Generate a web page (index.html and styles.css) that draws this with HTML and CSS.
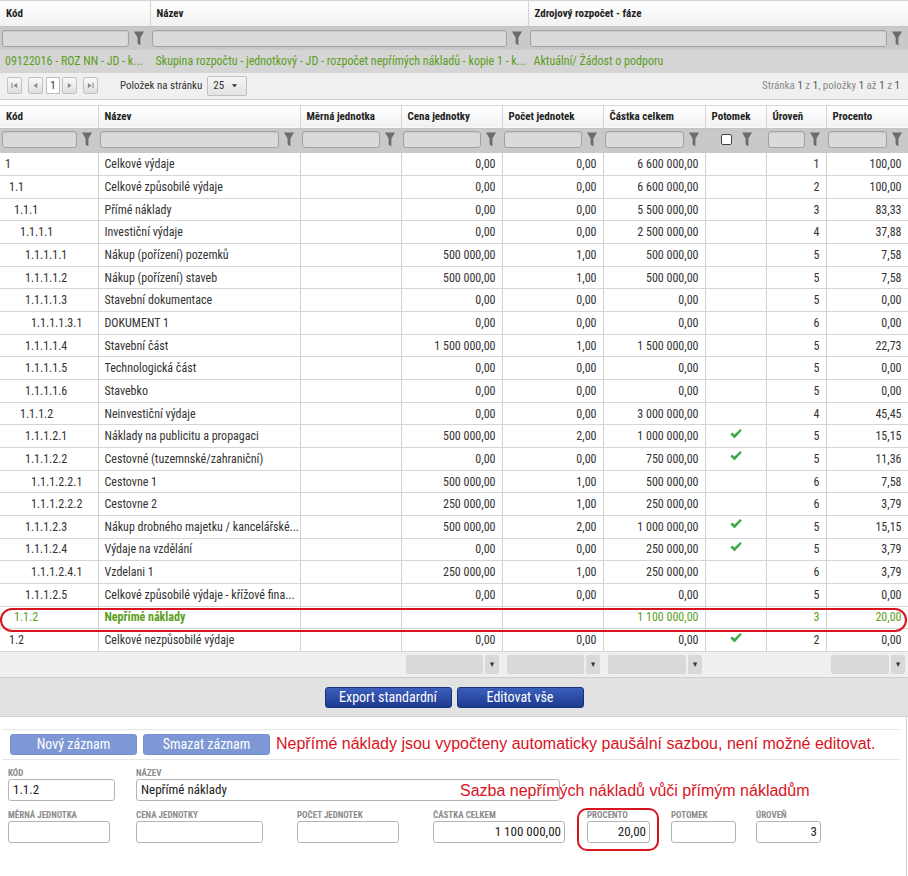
FILE: index.html
```html
<!DOCTYPE html>
<html lang="cs">
<head>
<meta charset="utf-8">
<title>Rozpočet</title>
<link rel="stylesheet" href="styles.css">
</head>
<body>
<svg width="0" height="0" class="defs">
  <defs>
    <symbol id="funnel" viewBox="0 0 10 15"><path d="M0 0.5 H10 L6.4 6.5 V14.5 L3.6 12.5 V6.5 Z"/></symbol>
    <symbol id="check" viewBox="0 0 12 10"><path d="M0.3 5.3 L2.3 3.4 L4.4 5.5 L10.3 0 L11.8 1.6 L4.5 9.6 Z" fill="#3ea84a"/></symbol>
  </defs>
</svg>

<div class="top-grid">
  <table class="grid top">
    <colgroup><col class="c150"><col class="c378"><col class="c380"></colgroup>
    <thead>
      <tr class="head"><th>Kód</th><th>Název</th><th>Zdrojový rozpočet - fáze</th></tr>
      <tr class="filter">
        <td><div class="fbox"><span class="fin"></span><svg class="funnel"><use href="#funnel"/></svg></div></td>
        <td><div class="fbox"><span class="fin"></span><svg class="funnel"><use href="#funnel"/></svg></div></td>
        <td><div class="fbox"><span class="fin"></span><svg class="funnel"><use href="#funnel"/></svg></div></td>
      </tr>
    </thead>
    <tbody>
      <tr class="sel">
        <td>09122016 - ROZ NN - JD - k...</td>
        <td>Skupina rozpočtu - jednotkový - JD - rozpočet nepřímých nákladů - kopie 1 - k...</td>
        <td>Aktuální/ Žádost o podporu</td>
      </tr>
    </tbody>
  </table>
  <div class="pager">
    <span class="pbtn"><svg viewBox="0 0 8 8"><rect x="0.5" y="1" width="1.2" height="6"/><path d="M7 1 V7 L2.8 4 Z"/></svg></span>
    <span class="pbtn"><svg viewBox="0 0 8 8"><path d="M6 1 V7 L1.8 4 Z"/></svg></span>
    <span class="pinput">1</span>
    <span class="pbtn"><svg viewBox="0 0 8 8"><path d="M2 1 V7 L6.2 4 Z"/></svg></span>
    <span class="pbtn last"><svg viewBox="0 0 8 8"><path d="M1 1 V7 L5.2 4 Z"/><rect x="6.3" y="1" width="1.2" height="6"/></svg></span>
    <span class="plabel">Položek na stránku</span>
    <span class="psel">25<svg viewBox="0 0 8 8"><path d="M1 2.5 H7 L4 6 Z"/></svg></span>
    <span class="pinfo">Stránka <b>1</b> z <b>1</b>, položky <b>1</b> až <b>1</b> z <b>1</b></span>
  </div>
</div>

<div class="main-grid">
  <table class="grid main">
    <colgroup>
      <col class="w98"><col class="w202"><col class="w101"><col class="w101"><col class="w101"><col class="w102"><col class="w61"><col class="w60"><col class="w82">
    </colgroup>
    <thead>
      <tr class="head">
        <th>Kód</th><th>Název</th><th>Měrná jednotka</th><th>Cena jednotky</th><th>Počet jednotek</th><th>Částka celkem</th><th>Potomek</th><th>Úroveň</th><th>Procento</th>
      </tr>
      <tr class="filter">
        <td><div class="fbox"><span class="fin"></span><svg class="funnel"><use href="#funnel"/></svg></div></td>
        <td><div class="fbox"><span class="fin"></span><svg class="funnel"><use href="#funnel"/></svg></div></td>
        <td><div class="fbox"><span class="fin"></span><svg class="funnel"><use href="#funnel"/></svg></div></td>
        <td><div class="fbox"><span class="fin"></span><svg class="funnel"><use href="#funnel"/></svg></div></td>
        <td><div class="fbox"><span class="fin"></span><svg class="funnel"><use href="#funnel"/></svg></div></td>
        <td><div class="fbox"><span class="fin"></span><svg class="funnel"><use href="#funnel"/></svg></div></td>
        <td><div class="fbox center"><span class="cbx"></span><svg class="funnel"><use href="#funnel"/></svg></div></td>
        <td><div class="fbox"><span class="fin"></span><svg class="funnel"><use href="#funnel"/></svg></div></td>
        <td><div class="fbox"><span class="fin"></span><svg class="funnel"><use href="#funnel"/></svg></div></td>
      </tr>
    </thead>
    <tbody>
      <tr><td class="lv1">1</td><td>Celkové výdaje</td><td></td><td class="num">0,00</td><td class="num">0,00</td><td class="num">6 600 000,00</td><td></td><td class="num">1</td><td class="num">100,00</td></tr>
      <tr><td class="lv2">1.1</td><td>Celkové způsobilé výdaje</td><td></td><td class="num">0,00</td><td class="num">0,00</td><td class="num">6 600 000,00</td><td></td><td class="num">2</td><td class="num">100,00</td></tr>
      <tr><td class="lv3">1.1.1</td><td>Přímé náklady</td><td></td><td class="num">0,00</td><td class="num">0,00</td><td class="num">5 500 000,00</td><td></td><td class="num">3</td><td class="num">83,33</td></tr>
      <tr><td class="lv4">1.1.1.1</td><td>Investiční výdaje</td><td></td><td class="num">0,00</td><td class="num">0,00</td><td class="num">2 500 000,00</td><td></td><td class="num">4</td><td class="num">37,88</td></tr>
      <tr><td class="lv5">1.1.1.1.1</td><td>Nákup (pořízení) pozemků</td><td></td><td class="num">500 000,00</td><td class="num">1,00</td><td class="num">500 000,00</td><td></td><td class="num">5</td><td class="num">7,58</td></tr>
      <tr><td class="lv5">1.1.1.1.2</td><td>Nákup (pořízení) staveb</td><td></td><td class="num">500 000,00</td><td class="num">1,00</td><td class="num">500 000,00</td><td></td><td class="num">5</td><td class="num">7,58</td></tr>
      <tr><td class="lv5">1.1.1.1.3</td><td>Stavební dokumentace</td><td></td><td class="num">0,00</td><td class="num">0,00</td><td class="num">0,00</td><td></td><td class="num">5</td><td class="num">0,00</td></tr>
      <tr><td class="lv6">1.1.1.1.3.1</td><td>DOKUMENT 1</td><td></td><td class="num">0,00</td><td class="num">0,00</td><td class="num">0,00</td><td></td><td class="num">6</td><td class="num">0,00</td></tr>
      <tr><td class="lv5">1.1.1.1.4</td><td>Stavební část</td><td></td><td class="num">1 500 000,00</td><td class="num">1,00</td><td class="num">1 500 000,00</td><td></td><td class="num">5</td><td class="num">22,73</td></tr>
      <tr><td class="lv5">1.1.1.1.5</td><td>Technologická část</td><td></td><td class="num">0,00</td><td class="num">0,00</td><td class="num">0,00</td><td></td><td class="num">5</td><td class="num">0,00</td></tr>
      <tr><td class="lv5">1.1.1.1.6</td><td>Stavebko</td><td></td><td class="num">0,00</td><td class="num">0,00</td><td class="num">0,00</td><td></td><td class="num">5</td><td class="num">0,00</td></tr>
      <tr><td class="lv4">1.1.1.2</td><td>Neinvestiční výdaje</td><td></td><td class="num">0,00</td><td class="num">0,00</td><td class="num">3 000 000,00</td><td></td><td class="num">4</td><td class="num">45,45</td></tr>
      <tr><td class="lv5">1.1.1.2.1</td><td>Náklady na publicitu a propagaci</td><td></td><td class="num">500 000,00</td><td class="num">2,00</td><td class="num">1 000 000,00</td><td class="chk"><svg><use href="#check"/></svg></td><td class="num">5</td><td class="num">15,15</td></tr>
      <tr><td class="lv5">1.1.1.2.2</td><td>Cestovné (tuzemnské/zahraniční)</td><td></td><td class="num">0,00</td><td class="num">0,00</td><td class="num">750 000,00</td><td class="chk"><svg><use href="#check"/></svg></td><td class="num">5</td><td class="num">11,36</td></tr>
      <tr><td class="lv6">1.1.1.2.2.1</td><td>Cestovne 1</td><td></td><td class="num">500 000,00</td><td class="num">1,00</td><td class="num">500 000,00</td><td></td><td class="num">6</td><td class="num">7,58</td></tr>
      <tr><td class="lv6">1.1.1.2.2.2</td><td>Cestovne 2</td><td></td><td class="num">250 000,00</td><td class="num">1,00</td><td class="num">250 000,00</td><td></td><td class="num">6</td><td class="num">3,79</td></tr>
      <tr><td class="lv5">1.1.1.2.3</td><td>Nákup drobného majetku / kancelářské...</td><td></td><td class="num">500 000,00</td><td class="num">2,00</td><td class="num">1 000 000,00</td><td class="chk"><svg><use href="#check"/></svg></td><td class="num">5</td><td class="num">15,15</td></tr>
      <tr><td class="lv5">1.1.1.2.4</td><td>Výdaje na vzdělání</td><td></td><td class="num">0,00</td><td class="num">0,00</td><td class="num">250 000,00</td><td class="chk"><svg><use href="#check"/></svg></td><td class="num">5</td><td class="num">3,79</td></tr>
      <tr><td class="lv6">1.1.1.2.4.1</td><td>Vzdelani 1</td><td></td><td class="num">250 000,00</td><td class="num">1,00</td><td class="num">250 000,00</td><td></td><td class="num">6</td><td class="num">3,79</td></tr>
      <tr><td class="lv5">1.1.1.2.5</td><td>Celkové způsobilé výdaje - křížové fina...</td><td></td><td class="num">0,00</td><td class="num">0,00</td><td class="num">0,00</td><td></td><td class="num">5</td><td class="num">0,00</td></tr>
      <tr class="green"><td class="lv3">1.1.2</td><td class="strong">Nepřímé náklady</td><td></td><td></td><td></td><td class="num">1 100 000,00</td><td></td><td class="num">3</td><td class="num">20,00</td></tr>
      <tr><td class="lv2">1.2</td><td>Celkové nezpůsobilé výdaje</td><td></td><td class="num">0,00</td><td class="num">0,00</td><td class="num">0,00</td><td class="chk"><svg><use href="#check"/></svg></td><td class="num">2</td><td class="num">0,00</td></tr>
    </tbody>
    <tfoot>
      <tr class="totals">
        <td></td><td></td><td></td>
        <td><div class="agg"><span class="abox"></span><span class="abtn">&#9662;</span></div></td>
        <td><div class="agg"><span class="abox"></span><span class="abtn">&#9662;</span></div></td>
        <td><div class="agg"><span class="abox"></span><span class="abtn">&#9662;</span></div></td>
        <td></td><td></td>
        <td><div class="agg"><span class="abox"></span><span class="abtn">&#9662;</span></div></td>
      </tr>
    </tfoot>
  </table>
  <div class="row-outline"></div>
</div>

<div class="toolbar">
  <button class="btn dark">Export standardní</button>
  <button class="btn dark">Editovat vše</button>
</div>

<div class="detail">
  <div class="actions">
    <button class="btn light">Nový záznam</button>
    <button class="btn light">Smazat záznam</button>
    <span class="note">Nepřímé náklady jsou vypočteny automaticky paušální sazbou, není možné editovat.</span>
  </div>
  <div class="form">
    <div class="frow">
      <div class="field f-kod"><span class="lbl">Kód</span><div class="inp i-kod">1.1.2</div></div>
      <div class="field f-naz"><span class="lbl">Název</span><div class="inp i-naz">Nepřímé náklady</div></div>
    </div>
    <div class="frow">
      <div class="field f-mj"><span class="lbl">Měrná jednotka</span><div class="inp i-mj"></div></div>
      <div class="field f-cj"><span class="lbl">Cena jednotky</span><div class="inp i-cj"></div></div>
      <div class="field f-pj"><span class="lbl">Počet jednotek</span><div class="inp i-pj"></div></div>
      <div class="field f-cc"><span class="lbl">Částka celkem</span><div class="inp i-cc r">1 100 000,00</div></div>
      <div class="field f-pr"><span class="lbl">Procento</span><div class="inp i-pr r">20,00</div></div>
      <div class="field f-po"><span class="lbl">Potomek</span><div class="inp i-po"></div></div>
      <div class="field f-ur"><span class="lbl">Úroveň</span><div class="inp i-ur r">3</div></div>
    </div>
  </div>
  <div class="anno-text">Sazba nepřímých nákladů vůči přímým nákladům</div>
  <div class="anno-box"></div>
</div>
</body>
</html>
```

FILE: styles.css
```css
:root {
  --cond: "Liberation Sans Narrow", "Roboto Condensed", "DejaVu Sans Condensed", Roboto, sans-serif;
  --green: #5c9e22;
  --red: #d8141e;
}
* { box-sizing: border-box; }
html, body { margin: 0; padding: 0; }
body {
  width: 908px;
  height: 876px;
  overflow: hidden;
  font-family: var(--cond);
  color: #333;
  background: #fff;
}
.defs { position: absolute; width: 0; height: 0; }

/* ---------- grids ---------- */
.grid {
  border-collapse: collapse;
  table-layout: fixed;
  width: 908px;
}
.c150 { width: 150px; } .c378 { width: 378px; } .c380 { width: 380px; }
.w98 { width: 98px; } .w202 { width: 202px; } .w101 { width: 101px; } .w102 { width: 102px; }
.w61 { width: 61px; } .w60 { width: 60px; } .w82 { width: 82px; }

.grid .head th {
  height: 23px;
  padding: 0 6px;
  text-align: left;
  font-weight: bold;
  font-size: 11px;
  color: #222;
  background: linear-gradient(#ffffff, #f1f1f1);
  border-top: 1px solid #d8d8d8;
  border-right: 1px solid #d4d4d4;
  border-bottom: 1px solid #c4c4c4;
  white-space: nowrap;
}
.top .head th { height: 26px; }
.grid .filter td {
  height: 23px;
  padding: 0 6px 0 2px;
  background: #c9c9c9;
}
.main .filter td {
  height: 25px;
  padding-bottom: 2px;
}
.fbox { display: flex; align-items: center; gap: 5px; }
.fbox.center { justify-content: center; gap: 10px; padding-left: 6px; }
.fin {
  flex: 1;
  height: 17px;
  background: #dadada;
  border: 1px solid #a2a2a2;
  border-radius: 3px;
  box-shadow: inset 0 1px 1px rgba(0,0,0,0.08);
}
.funnel { width: 10px; height: 15px; flex: none; fill: #6c6c6c; }
.cbx {
  width: 11px; height: 11px;
  background: #fff;
  border: 1px solid #444;
  border-radius: 2px;
}

.top .sel td {
  height: 23px;
  padding: 0 5px;
  background: #d5d5d5;
  color: var(--green);
  font-size: 12px;
  white-space: nowrap;
  overflow: hidden;
  border-right: 1px solid #d5d5d5;
}

/* pager */
.pager {
  height: 27px;
  display: flex;
  align-items: center;
  padding: 0 8px 0 7px;
  background: #f0f0f0;
  border-bottom: 1px solid #c8c8c8;
  font-size: 11px;
  color: #333;
}
.pbtn {
  width: 15px; height: 17px;
  display: flex; align-items: center; justify-content: center;
  border: 1px solid #c2c2c2;
  border-radius: 2px;
  background: linear-gradient(#f9f9f9, #dedede);
  margin-right: 6px;
}
.pbtn svg { width: 7px; height: 7px; fill: #8a8a8a; }
.pbtn:nth-child(2) { margin-right: 3px; }
.pinput {
  width: 14px; height: 17px;
  background: #fff;
  border: 1px solid #bdbdbd;
  font-size: 11px;
  display: flex; align-items: center; justify-content: center;
  margin-right: 2px;
}
.plabel { margin-left: 16px; }
.psel {
  margin-left: 5px;
  width: 40px; height: 20px;
  display: flex; align-items: center; justify-content: space-between;
  padding: 0 8px 0 5px;
  border: 1px solid #c0c0c0;
  border-radius: 2px;
  background: linear-gradient(#f6f6f6, #e2e2e2);
  font-size: 11px;
}
.psel svg { width: 7px; height: 7px; fill: #333; }
.pinfo { margin-left: auto; color: #8a8a8a; }
.pinfo b { font-weight: normal; color: #555; }

/* main grid */
.main-grid { position: relative; margin-top: 5px; }
.main tbody td {
  height: 22.67px;
  padding: 0 6px;
  font-size: 12px;
  color: #333;
  border-right: 1px solid #d2d2d2;
  border-bottom: 1px solid #d6d6d6;
  white-space: nowrap;
  overflow: hidden;
  text-overflow: clip;
}
.main tbody td.num { text-align: right; }
.main tbody td.lv1 { padding-left: 5px; }
.main tbody td.lv2 { padding-left: 9px; }
.main tbody td.lv3 { padding-left: 14px; }
.main tbody td.lv4 { padding-left: 20px; }
.main tbody td.lv5 { padding-left: 25px; }
.main tbody td.lv6 { padding-left: 31px; }
.main tbody td.chk { text-align: center; padding: 0; }
.chk svg { width: 12px; height: 10px; display: inline-block; vertical-align: 2px; }
.main tbody tr.green td { color: var(--green); }
.main tbody td.strong { font-weight: bold; }

.main .totals td {
  height: 26px;
  padding: 0 3px 0 5px;
  background: #efefef;
  border-bottom: 1px solid #cfcfcf;
}
.agg { display: flex; align-items: center; gap: 2px; }
.abox { flex: 1; height: 19px; background: #d9d9d9; border-radius: 2px; }
.abtn {
  width: 14px; height: 19px;
  background: #d9d9d9;
  border-radius: 2px;
  font-size: 9px;
  color: #333;
  display: flex; align-items: center; justify-content: center;
}

.row-outline {
  position: absolute;
  left: 0;
  top: 503px;
  width: 907px;
  height: 24px;
  border: 2px solid var(--red);
  border-radius: 12px;
  pointer-events: none;
}

/* toolbar */
.toolbar {
  height: 39px;
  display: flex;
  justify-content: center;
  gap: 5px;
  padding-top: 9px;
  background: #e2e2e2;
  border-bottom: 1px solid #d4d4d4;
}
.btn {
  width: 127px;
  height: 21px;
  padding: 0;
  border-radius: 3px;
  font-family: var(--cond);
  font-size: 14px;
  color: #fff;
  cursor: pointer;
}
.btn.dark {
  background: linear-gradient(#3b5fbd, #1d3a8e);
  border: 1px solid #17327c;
}
.btn.light {
  background: #7e98d6;
  border: 1px solid #7590d0;
}

/* detail */
.detail {
  position: relative;
  height: 159px;
  width: 907px;
  border-right: 1px solid #cfcfcf;
  padding-top: 12px;
}
.actions {
  display: flex;
  align-items: center;
  gap: 6px;
  height: 31px;
  margin: 0 6px 0 2px;
  padding-left: 8px;
  border-top: 1px solid #e6e6e6;
  border-bottom: 1px solid #e6e6e6;
}
.note {
  font-family: "Liberation Sans", Arial, sans-serif;
  font-size: 16px;
  color: var(--red);
  white-space: nowrap;
}
.form { padding: 7px 0 0 8px; }
.frow { display: flex; margin-bottom: 8px; }
.field { display: flex; flex-direction: column; flex: none; }
.lbl {
  height: 12px;
  line-height: 12px;
  font-size: 9px;
  font-weight: bold;
  text-transform: uppercase;
  color: #8c8c8c;
}
.inp {
  height: 22px;
  border: 1px solid #b4b4b4;
  border-radius: 3px;
  background: #fff;
  font-size: 13px;
  color: #222;
  line-height: 20px;
  padding: 0 4px;
  white-space: nowrap;
}
.inp.r { text-align: right; padding-right: 3px; }
.f-kod { width: 128px; } .i-kod { width: 107px; }
.f-naz { width: 430px; } .i-naz { width: 424px; }
.f-mj { width: 128px; } .i-mj { width: 102px; }
.f-cj { width: 161px; } .i-cj { width: 127px; }
.f-pj { width: 136px; } .i-pj { width: 102px; }
.f-cc { width: 154px; } .i-cc { width: 132px; }
.f-pr { width: 84px; }  .i-pr { width: 63px; }
.f-po { width: 85px; }  .i-po { width: 65px; }
.f-ur { width: 70px; }  .i-ur { width: 65px; }

.anno-text {
  position: absolute;
  left: 460px;
  top: 65px;
  font-family: "Liberation Sans", Arial, sans-serif;
  font-size: 16px;
  color: var(--red);
  white-space: nowrap;
}
.anno-box {
  position: absolute;
  left: 577px;
  top: 91px;
  width: 82px;
  height: 43px;
  border: 2px solid var(--red);
  border-radius: 10px;
  pointer-events: none;
}
```
